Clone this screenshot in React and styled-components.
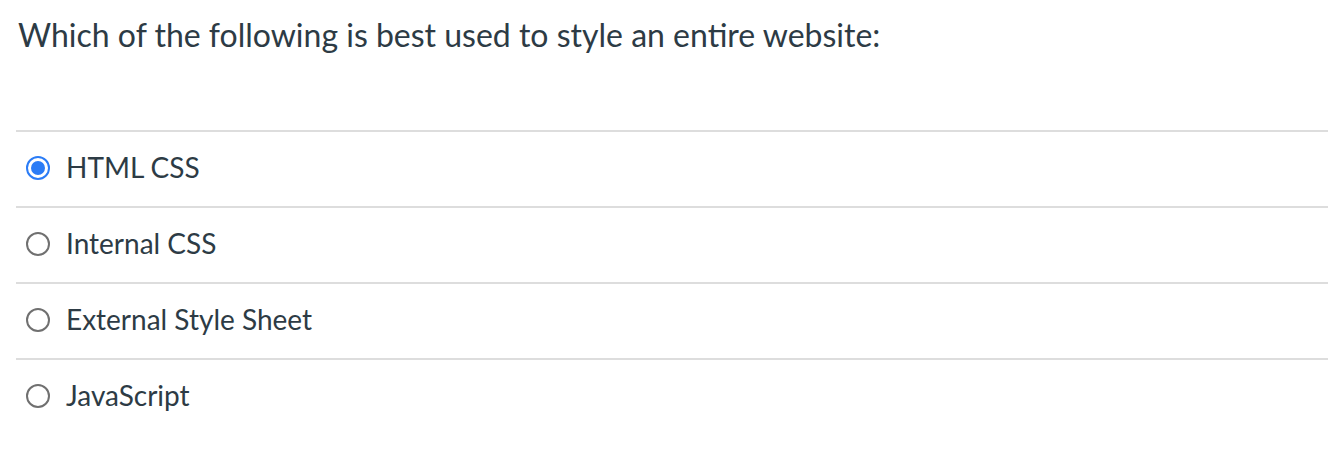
import { useState } from "react";
import styled, { createGlobalStyle } from "styled-components";

const GlobalStyle = createGlobalStyle`
    body {
        margin: 0;
        background: #ffffff;
        font-family: Lato, "Open Sans", sans-serif;
        color: #2d3b45;
    }
`;

const Page = styled.div`
    padding: 0 0 0 16px;
`;

const Question = styled.h2`
    margin: 0;
    padding: 16px 0 0 2px;
    height: 130px;
    box-sizing: border-box;
    font-size: 32px;
    font-weight: 400;
    line-height: 38px;
`;

const Answers = styled.div`
    display: flex;
    flex-direction: column;
`;

const Row = styled.label`
    display: flex;
    align-items: center;
    gap: 16px;
    height: 76px;
    box-sizing: border-box;
    border-top: 2px solid #dddddd;
    padding: 0 0 4px 10px;
    cursor: pointer;
    font-size: 28px;
`;

const Radio = styled.span`
    flex: none;
    width: 24px;
    height: 24px;
    margin-top: 2px;
    box-sizing: border-box;
    border-radius: 50%;
    border: ${(p) => (p.checked ? "2.5px solid #2b7cf6" : "2px solid #707070")};
    display: flex;
    align-items: center;
    justify-content: center;
    &::after {
        content: "";
        width: 14px;
        height: 14px;
        border-radius: 50%;
        background: #2b7cf6;
        display: ${(p) => (p.checked ? "block" : "none")};
    }
`;

const options = ["HTML CSS", "Internal CSS", "External Style Sheet", "JavaScript"];

export default function App() {
    const [picked, setPicked] = useState(0);

    return (
        <Page>
            <GlobalStyle />
            <Question>Which of the following is best used to style an entire website:</Question>
            <Answers>
                {options.map((text, i) => (
                    <Row key={text} onClick={() => setPicked(i)}>
                        <Radio checked={picked === i} />
                        {text}
                    </Row>
                ))}
            </Answers>
        </Page>
    );
}
